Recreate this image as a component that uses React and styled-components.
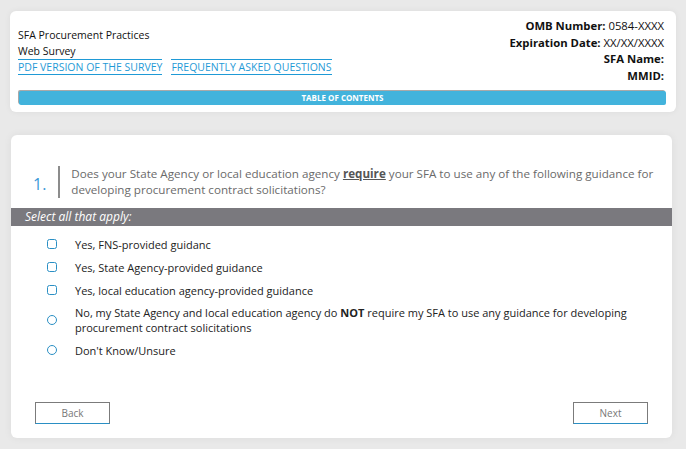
import React from 'react';
import styled, { createGlobalStyle } from 'styled-components';

const GlobalStyle = createGlobalStyle`
  html, body {
    margin: 0;
    padding: 0;
    background: #e9e9e9;
    font-family: "Open Sans", "Noto Sans", sans-serif;
  }
`;

const options = [
  { type: 'checkbox', label: 'Yes, FNS-provided guidanc' },
  { type: 'checkbox', label: 'Yes, State Agency-provided guidance' },
  { type: 'checkbox', label: 'Yes, local education agency-provided guidance' },
  {
    type: 'radio',
    label: (
      <>
        No, my State Agency and local education agency do <b>NOT</b> require my SFA to use any guidance for developing
        procurement contract solicitations
      </>
    ),
  },
  { type: 'radio', label: "Don't Know/Unsure" },
];

function App() {
  return (
    <Page>
      <GlobalStyle />
      <HeaderCard>
        <HeaderTop>
          <TitleBlock>
            <Title>SFA Procurement Practices</Title>
            <Title>Web Survey</Title>
            <Links>
              <HeaderLink href="#">PDF VERSION OF THE SURVEY</HeaderLink>
              <HeaderLink href="#">FREQUENTLY ASKED QUESTIONS</HeaderLink>
            </Links>
          </TitleBlock>
          <MetaBlock>
            <div><b>OMB Number:</b> 0584-XXXX</div>
            <div><b>Expiration Date:</b> XX/XX/XXXX</div>
            <div><b>SFA Name:</b></div>
            <div><b>MMID:</b></div>
          </MetaBlock>
        </HeaderTop>
        <TocBar>TABLE OF CONTENTS</TocBar>
      </HeaderCard>

      <QuestionCard>
        <QuestionHead>
          <QNumber>1.</QNumber>
          <QText>
            Does your State Agency or local education agency <Key>require</Key> your SFA to use any of the following
            guidance for developing procurement contract solicitations?
          </QText>
        </QuestionHead>
        <Instruction>Select all that apply:</Instruction>
        <OptionList>
          {options.map((o, i) => (
            <Option key={i}>
              <Mark $round={o.type === 'radio'} />
              <OptionLabel>{o.label}</OptionLabel>
            </Option>
          ))}
        </OptionList>
        <Nav>
          <NavButton>Back</NavButton>
          <NavButton>Next</NavButton>
        </Nav>
      </QuestionCard>
    </Page>
  );
}

const Page = styled.div`
  padding: 11px 14px 11px 10px;
  display: flex;
  flex-direction: column;
  gap: 23px;
  width: 686px;
  box-sizing: border-box;
`;

const HeaderCard = styled.div`
  background: #fff;
  border-radius: 6px;
  box-shadow: 0 0 6px rgba(0, 0, 0, 0.06);
  padding: 7px 12px 7px 8px;
  width: 666px;
  height: 101px;
  box-sizing: border-box;
`;

const HeaderTop = styled.div`
  display: flex;
  justify-content: space-between;
  align-items: flex-start;
`;

const TitleBlock = styled.div`
  padding-top: 9px;
  font-size: 10.5px;
  color: #111;
`;

const Title = styled.div`
  line-height: 16px;
`;

const Links = styled.div`
  display: flex;
  gap: 9px;
`;

const HeaderLink = styled.a`
  color: #1f9ad6;
  text-decoration: none;
  font-size: 10.5px;
  line-height: 14px;
  border-top: 1px solid #1f9ad6;
  border-bottom: 1px solid #1f9ad6;
`;

const MetaBlock = styled.div`
  text-align: right;
  font-size: 11.3px;
  line-height: 16.5px;
  color: #111;

  b {
    font-weight: 700;
  }
`;

const TocBar = styled.div`
  margin-top: 7px;
  background: #42b3dc;
  color: #fff;
  font-size: 8px;
  font-weight: 700;
  text-align: center;
  height: 14px;
  line-height: 14px;
  border-radius: 2px;
  box-shadow: -1px -1px 0 #a9a9a9;
  margin-left: 1px;
  margin-right: -2px;
`;

const QuestionCard = styled.div`
  background: #fff;
  border-radius: 6px;
  box-shadow: 0 0 8px rgba(0, 0, 0, 0.06);
  width: 661px;
  height: 303px;
  margin-left: 1px;
  padding: 31px 0 0;
  box-sizing: border-box;
`;

const QuestionHead = styled.div`
  display: flex;
  align-items: center;
  padding-left: 22px;
  padding-right: 10px;
`;

const QNumber = styled.div`
  color: #3a98d8;
  font-size: 16px;
  width: 36px;
  padding-top: 3px;
`;

const QText = styled.div`
  border-left: 2px solid #8c8c8c;
  padding-left: 11px;
  color: #6a6a6a;
  font-size: 11.65px;
  line-height: 16px;
`;

const Key = styled.span`
  color: #555;
  font-weight: 700;
  text-decoration: underline;
`;

const Instruction = styled.div`
  margin-top: 10px;
  background: #7a797e;
  color: #fff;
  font-style: italic;
  font-size: 12px;
  height: 18px;
  line-height: 18px;
  padding-left: 14px;
`;

const OptionList = styled.div`
  padding: 10px 20px 0 36px;
  display: flex;
  flex-direction: column;
  gap: 7px;
`;

const Option = styled.div`
  display: flex;
  align-items: center;
  min-height: 16px;
`;

const Mark = styled.span`
  flex: none;
  width: 8px;
  height: 8px;
  border: 1.5px solid #2a8fc4;
  border-radius: ${(p) => (p.$round ? '50%' : '2.5px')};
  margin-right: 18px;
`;

const OptionLabel = styled.div`
  font-size: 11px;
  line-height: 15px;
  color: #222;
`;

const Nav = styled.div`
  display: flex;
  justify-content: space-between;
  padding: 0 24px;
  margin-top: 44px;
`;

const NavButton = styled.button`
  width: 75px;
  height: 22px;
  background: #fff;
  border: 1px solid #7b7b7b;
  border-bottom: 1.5px solid #2a8fc4;
  color: #777;
  font-family: inherit;
  font-size: 10px;
  padding: 0;
`;

export default App;
